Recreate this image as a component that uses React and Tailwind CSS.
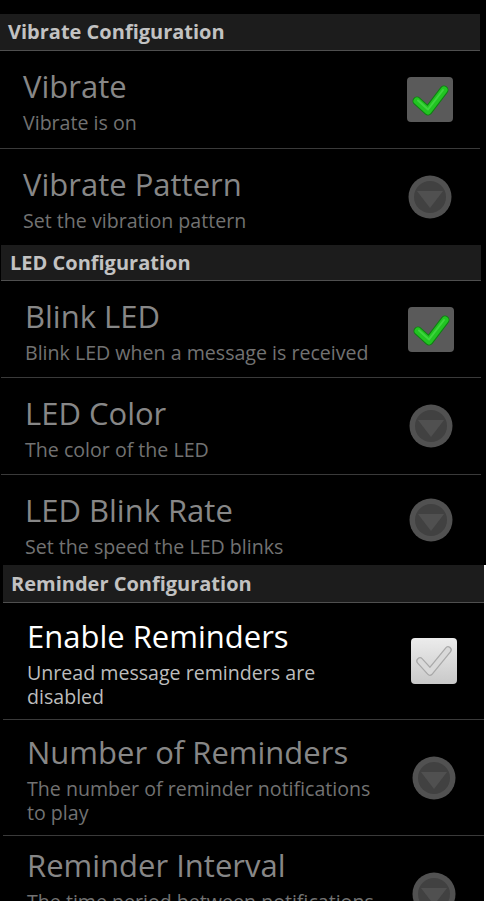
import React from "react";

const font = { fontFamily: '"Open Sans", "Noto Sans", "DejaVu Sans", sans-serif' };

function GreenCheck() {
  return (
    <div className="w-[46px] h-[45px] rounded-[4px] bg-[#5a5a5a] flex items-center justify-center">
      <svg width="46" height="45" viewBox="0 0 46 45">
        <path d="M10 24 L21 34 L37 13" fill="none" stroke="#0f7f12" strokeWidth="9" strokeLinecap="round" strokeLinejoin="round" />
        <path d="M10 24 L21 34 L37 13" fill="none" stroke="#22c422" strokeWidth="7" strokeLinecap="round" strokeLinejoin="round" />
        <path d="M11 23.5 L21 32.5 L36 13" fill="none" stroke="#52e052" strokeWidth="2" strokeLinecap="round" strokeLinejoin="round" opacity="0.6" />
      </svg>
    </div>
  );
}

function GrayCheck() {
  return (
    <div className="w-[46px] h-[46px] rounded-[4px] bg-gradient-to-b from-[#ececec] to-[#c9c9c9] flex items-center justify-center">
      <svg width="46" height="46" viewBox="0 0 46 46">
        <path d="M9 23 L19 34 L37 12" fill="none" stroke="#a9a9a9" strokeWidth="7.5" strokeLinecap="round" strokeLinejoin="round" />
        <path d="M9 23 L19 34 L37 12" fill="none" stroke="#d9d9d9" strokeWidth="5" strokeLinecap="round" strokeLinejoin="round" />
      </svg>
    </div>
  );
}

function Dropdown() {
  return (
    <svg width="44" height="44" viewBox="0 0 44 44">
      <circle cx="22" cy="22" r="21.5" fill="#515151" />
      <circle cx="22" cy="22" r="16" fill="#414141" />
      <path d="M9 16 L35 16 L22 33 Z" fill="#505050" />
    </svg>
  );
}

function Header({ text, h, pad }) {
  return (
    <div className={`${h} ${pad} flex items-center bg-[#1c1c1c] border-b border-[#4f4f4f]`}>
      <span className="text-[20px] font-bold text-[#c2c2c2] leading-none" style={font}>
        {text}
      </span>
    </div>
  );
}

function Row({ title, summary, widget, h, pt, pad, divider, enabled }) {
  return (
    <div className={`${h} ${pad} flex items-start ${divider ? "border-b border-[#3a3a3a]" : ""}`}>
      <div className={`flex-1 ${pt} min-w-0`}>
        <div
          className={`text-[31px] leading-[37px] ${enabled ? "text-white" : "text-[#878787]"}`}
          style={font}
        >
          {title}
        </div>
        <div
          className={`mt-[6px] w-[355px] text-[19.6px] leading-[24px] ${enabled ? "text-[#bdbdbd]" : "text-[#727272]"}`}
          style={font}
        >
          {summary}
        </div>
      </div>
      <div className="w-[46px] mr-[27px] self-center flex items-center justify-center">
        {widget === "check" && <GreenCheck />}
        {widget === "gray" && <GrayCheck />}
        {widget === "drop" && <Dropdown />}
      </div>
    </div>
  );
}

export default function App() {
  return (
    <div className="w-[486px] h-[901px] bg-black overflow-hidden">
      {/* Section 1 */}
      <div className="w-[480px]">
        <div className="h-[14px]" />
        <Header text="Vibrate Configuration" h="h-[37px]" pad="pl-[8px]" />
        <Row title="Vibrate" summary="Vibrate is on" widget="check" h="h-[98px]" pt="pt-[17px]" pad="pl-[23px]" divider />
        <Row title="Vibrate Pattern" summary="Set the vibration pattern" widget="drop" h="h-[96px]" pt="pt-[17px]" pad="pl-[23px]" />
      </div>
      {/* Section 2 */}
      <div className="w-[480px] ml-px">
        <Header text="LED Configuration" h="h-[36px]" pad="pl-[9px]" />
        <Row title="Blink LED" summary="Blink LED when a message is received" widget="check" h="h-[97px]" pt="pt-[17px]" pad="pl-[24px]" divider />
        <Row title="LED Color" summary="The color of the LED" widget="drop" h="h-[97px]" pt="pt-[17px]" pad="pl-[24px]" divider />
        <Row title="LED Blink Rate" summary="Set the speed the LED blinks" widget="drop" h="h-[90px]" pt="pt-[17px]" pad="pl-[24px]" />
      </div>
      {/* Section 3 */}
      <div className="flex">
        <div className="w-[3px]" />
        <div className="w-[481px]">
          <Header text="Reminder Configuration" h="h-[38px]" pad="pl-[8px]" />
          <Row title="Enable Reminders" summary="Unread message reminders are disabled" widget="gray" h="h-[117px]" pt="pt-[15px]" pad="pl-[24px]" divider enabled />
          <Row title="Number of Reminders" summary="The number of reminder notifications to play" widget="drop" h="h-[116px]" pt="pt-[14px]" pad="pl-[24px]" divider />
          <Row title="Reminder Interval" summary="The time period between notifications" widget="drop" h="h-[116px]" pt="pt-[11px]" pad="pl-[24px]" />
        </div>
        <div className="flex-1 bg-white" />
      </div>
    </div>
  );
}
